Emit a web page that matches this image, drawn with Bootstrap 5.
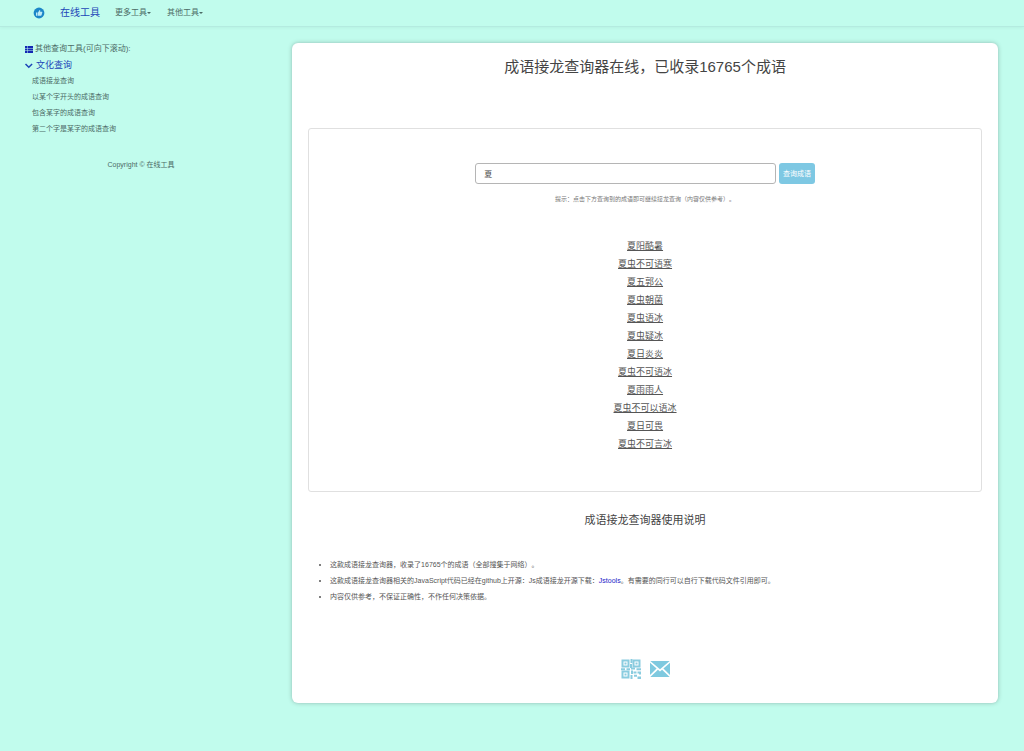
<!DOCTYPE html>
<html lang="zh-CN">
<head>
<meta charset="utf-8">
<meta name="viewport" content="width=device-width, initial-scale=1">
<title>成语接龙查询器</title>
<link href="https://cdn.jsdelivr.net/npm/bootstrap@5.3.0/dist/css/bootstrap.min.css" rel="stylesheet">
<style>
body { background: #c1fced; color: #555; font: 7px/16px "Liberation Sans", "Noto Sans CJK SC", sans-serif; text-spacing-trim: space-all; }
a { color: #555; }
.site-nav { height: 27px; padding: 0 32px; border-bottom: 1px solid #b4ebe0; box-shadow: 0 1px 3px rgba(0,60,60,.06); }
.site-nav .navbar-brand { font-size: 10px; line-height: 16px; color: #1d45b8; margin: 0 15px 0 0; padding: 0; }
.brand-mark { margin-right: 14px; }
.site-nav .navbar-nav { --bs-navbar-nav-link-padding-x: 0; gap: 16px; }
.site-nav .nav-link { font-size: 8px; line-height: 16px; color: #4c6b66; padding: 0; }
.site-nav .dropdown-toggle::after { margin-left: 0; vertical-align: 1px; border-width: 2px; border-bottom: 0; }
.dropdown-menu { --bs-dropdown-font-size: 8px; --bs-dropdown-min-width: 80px; }
.page-row { display: grid; grid-template-columns: 12fr 29fr; padding: 16px 26px 46px 0; }
.side { padding-left: 24px; color: #4c6b66; }
.side a { color: #4c6b66; text-decoration: none; }
.side-head { font-size: 8px; line-height: 12px; gap: 2px; }
.side .side-group { font-size: 9px; line-height: 16px; gap: 3px; margin-top: 2px; color: #1d45b8; }
.copyright { padding: 20px 34px 0 0; }
.panel { border: 0; border-radius: 6px; padding: 12px 16px 24px; box-shadow: 0 0 4px rgba(70,90,90,.4); }
.panel h1 { font-size: 15px; line-height: 24px; font-weight: 400; color: #444; margin: 0 0 49px; }
.panel h2 { font-size: 11px; line-height: 16px; font-weight: 400; color: #444; margin: 20px 0 29px; }
.result-box { border: 1px solid #e0e0e0; border-radius: 3px; padding: 34px 16px 38px; }
.word-form { gap: 3px; }
.word-form .form-control { width: 47%; height: 21px; font-size: 8px; line-height: 12px; padding: 0 8px; border-color: #b5b5b5; border-radius: 3px; color: #444; }
.word-form .btn { width: 36px; height: 21px; font-size: 7px; line-height: 12px; padding: 0; border: 0; border-radius: 3px; background: #7ec8e3; color: #fff; }
.hint { font-size: 6px; line-height: 12px; color: #777; margin: 9px 0 32px; }
.words { font-size: 9px; line-height: 18px; }
.notes { padding-left: 22px; margin: 0 0 54px; color: #555; }
.notes a { color: #2222c8; text-decoration: none; }
.contact { gap: 9px; }
</style>
</head>
<body>
<nav class="site-nav navbar navbar-expand flex-nowrap">
  <a class="navbar-brand d-flex align-items-center" href="#">
    <svg class="brand-mark" width="14" height="14" viewBox="0 0 14 14" aria-hidden="true"><circle cx="7" cy="7" r="5.4" fill="#1c86c8"/><path d="M4 6.5h1.5v3.2H4zM6 6.4 7.6 3.9c.8 0 .8.8.5 1.800h1.700c.5 0 .6.4.5.8l-.7 2.600c-.1.4-.4.6-.8.6H6z" fill="#bfeaf5"/></svg>在线工具</a>
  <ul class="navbar-nav">
    <li class="nav-item dropdown"><a class="nav-link dropdown-toggle" href="#" data-bs-toggle="dropdown">更多工具</a><ul class="dropdown-menu"><li><a class="dropdown-item" href="#">文化查询</a></li></ul></li>
    <li class="nav-item dropdown"><a class="nav-link dropdown-toggle" href="#" data-bs-toggle="dropdown">其他工具</a><ul class="dropdown-menu"><li><a class="dropdown-item" href="#">成语接龙查询</a></li></ul></li>
  </ul>
</nav>
<div class="page-row">
  <aside class="side">
    <div class="side-head d-flex align-items-center"><svg width="9" height="9" viewBox="0 0 9 9" fill="#1428b4" aria-hidden="true"><path d="M1 1h2v2H1zM3.500 1H9v2H3.500zM1 3.500h2v2H1zM3.500 3.500H9v2H3.500zM1 6h2v2H1zM3.500 6H9v2H3.500z"/></svg>其他查询工具(可向下滚动):</div>
    <a class="side-group d-flex align-items-center" href="#"><svg width="9" height="9" viewBox="0 0 9 9" fill="none" stroke="#1d45b8" stroke-width="1.500" aria-hidden="true"><path d="m1.500 3 3.300 3.300L8.100 3"/></svg>文化查询</a>
    <ul class="list-unstyled ps-2 mb-0">
      <li><a href="#">成语接龙查询</a></li>
      <li><a href="#">以某个字开头的成语查询</a></li>
      <li><a href="#">包含某字的成语查询</a></li>
      <li><a href="#">第二个字是某字的成语查询</a></li>
    </ul>
    <p class="copyright text-center mb-0">Copyright © 在线工具</p>
  </aside>
  <main class="panel card">
    <h1 class="text-center">成语接龙查询器在线，已收录16765个成语</h1>
    <section class="result-box text-center">
      <form class="word-form d-flex justify-content-center" onsubmit="return false">
        <input class="form-control" type="text" value="夏" aria-label="成语">
        <button class="btn" type="submit">查询成语</button>
      </form>
      <p class="hint">提示：点击下方查询到的成语即可继续接龙查询（内容仅供参考）。</p>
      <ul class="words list-unstyled mb-0">
        <li><a href="#">夏阳酷暑</a></li>
        <li><a href="#">夏虫不可语寒</a></li>
        <li><a href="#">夏五郭公</a></li>
        <li><a href="#">夏虫朝菌</a></li>
        <li><a href="#">夏虫语冰</a></li>
        <li><a href="#">夏虫疑冰</a></li>
        <li><a href="#">夏日炎炎</a></li>
        <li><a href="#">夏虫不可语冰</a></li>
        <li><a href="#">夏雨雨人</a></li>
        <li><a href="#">夏虫不可以语冰</a></li>
        <li><a href="#">夏日可畏</a></li>
        <li><a href="#">夏虫不可言冰</a></li>
      </ul>
    </section>
    <h2 class="text-center">成语接龙查询器使用说明</h2>
    <ul class="notes">
      <li>这款成语接龙查询器，收录了16765个的成语（全部搜集于网络）。</li>
      <li>这款成语接龙查询器相关的JavaScript代码已经在github上开源：Js成语接龙开源下载：<a href="#">Jstools</a>。有需要的同行可以自行下载代码文件引用即可。</li>
      <li>内容仅供参考，不保证正确性，不作任何决策依据。</li>
    </ul>
    <div class="contact d-flex justify-content-center">
      <a class="d-flex" href="#" aria-label="二维码"><svg width="20" height="20" viewBox="0 0 20 20" aria-hidden="true"><g fill="none" stroke="#8accdf" stroke-width="2"><path d="M1.500 1.500h6v6h-6zM12.500 1.500h6v6h-6zM1.500 12.500h6v6h-6z"/></g><path fill="#8accdf" d="M3.500 3.500h2v2h-2zM14.500 3.500h2v2h-2zM3.500 14.500h2v2h-2zM9.500 0h2v4h-2zM9 5h2v4H9zM0 9.300h4v2H0zM5.500 9.300H9v2H5.500zM10 8.500h4v2h-4zM15.500 9.300H20v2h-4.500zM10 11.500h2V15h-2zM12.500 12.500h3v2h-3zM16.500 12.500H20v3h-2v-1h-1.500zM9.500 16h2v4h-2zM13 15.800h3v2h-3zM16.500 17.500H20V20h-3.500z"/></svg></a>
      <a class="d-flex" href="#" aria-label="邮箱"><svg width="20" height="20" viewBox="0 0 20 20" fill="#7fc9df" aria-hidden="true"><path d="M.3 2h19.400L10 10.300zM0 3.800 6.600 9.600 0 16zM20 3.800 13.400 9.600 20 16zM7.900 10.800 10 12.600l2.100-1.800 7.600 7.200H.3z"/></svg></a>
    </div>
  </main>
</div>
<script src="https://cdn.jsdelivr.net/npm/bootstrap@5.3.0/dist/js/bootstrap.bundle.min.js"></script>
</body>
</html>
